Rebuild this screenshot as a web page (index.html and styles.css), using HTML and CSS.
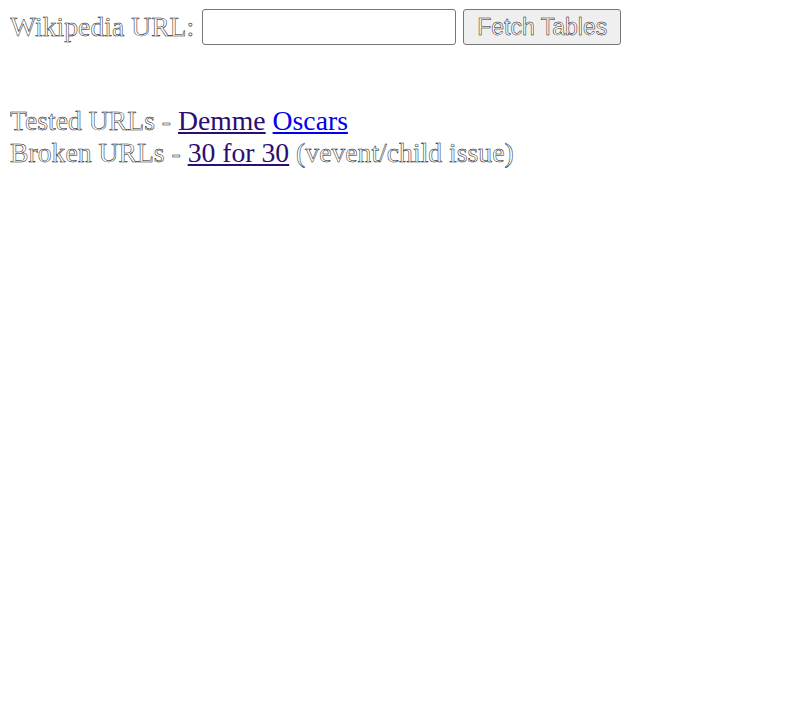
FILE: index.html
```html
<!DOCTYPE html>
<html>
<head>
<meta charset="utf-8">
<link rel="stylesheet" href="styles.css">
</head>
<body>
<div class="form-row">
  <label class="label" for="url">Wikipedia URL:</label>
  <input class="url-input" id="url" type="text">
  <button class="fetch-btn" type="button">Fetch Tables</button>
</div>
<div class="notes">
  <div class="line">Tested URLs - <a class="link visited" href="#a">Demme</a> <a class="link" href="#b">Oscars</a></div>
  <div class="line">Broken URLs - <a class="link visited" href="#c">30 for 30</a> (vevent/child issue)</div>
</div>
</body>
</html>
```
FILE: styles.css
```css
body {
  margin: 8px 8px 8px 10px;
  font-family: "Liberation Serif", "Times New Roman", serif;
  font-size: 27.7px;
  background: #fff;
}
.form-row {
  display: flex;
  align-items: center;
  gap: 7px;
  margin-top: 1px;
}
.label {
  margin-right: 1px;
}
.label, .line {
  color: #fff;
  -webkit-text-stroke: 0.5px #111;
  opacity: 0.999;
}
.link {
  -webkit-text-stroke: 0;
  color: #0000ee;
}
.link.visited {
  color: #2b0e72;
}
.url-input {
  width: 254px;
  height: 36px;
  border: 1px solid #767676;
  border-radius: 3px;
  padding: 1px 2px;
  box-sizing: border-box;
}
.fetch-btn {
  font-family: "Liberation Sans", Arial, sans-serif;
  font-size: 23px;
  width: 158px;
  height: 36px;
  padding: 0;
  background: #efefef;
  border: 1px solid #767676;
  border-radius: 3px;
  color: #fff;
  -webkit-text-stroke: 0.5px #111;
  opacity: 0.999;
}
.notes {
  margin-top: 60px;
}
```
